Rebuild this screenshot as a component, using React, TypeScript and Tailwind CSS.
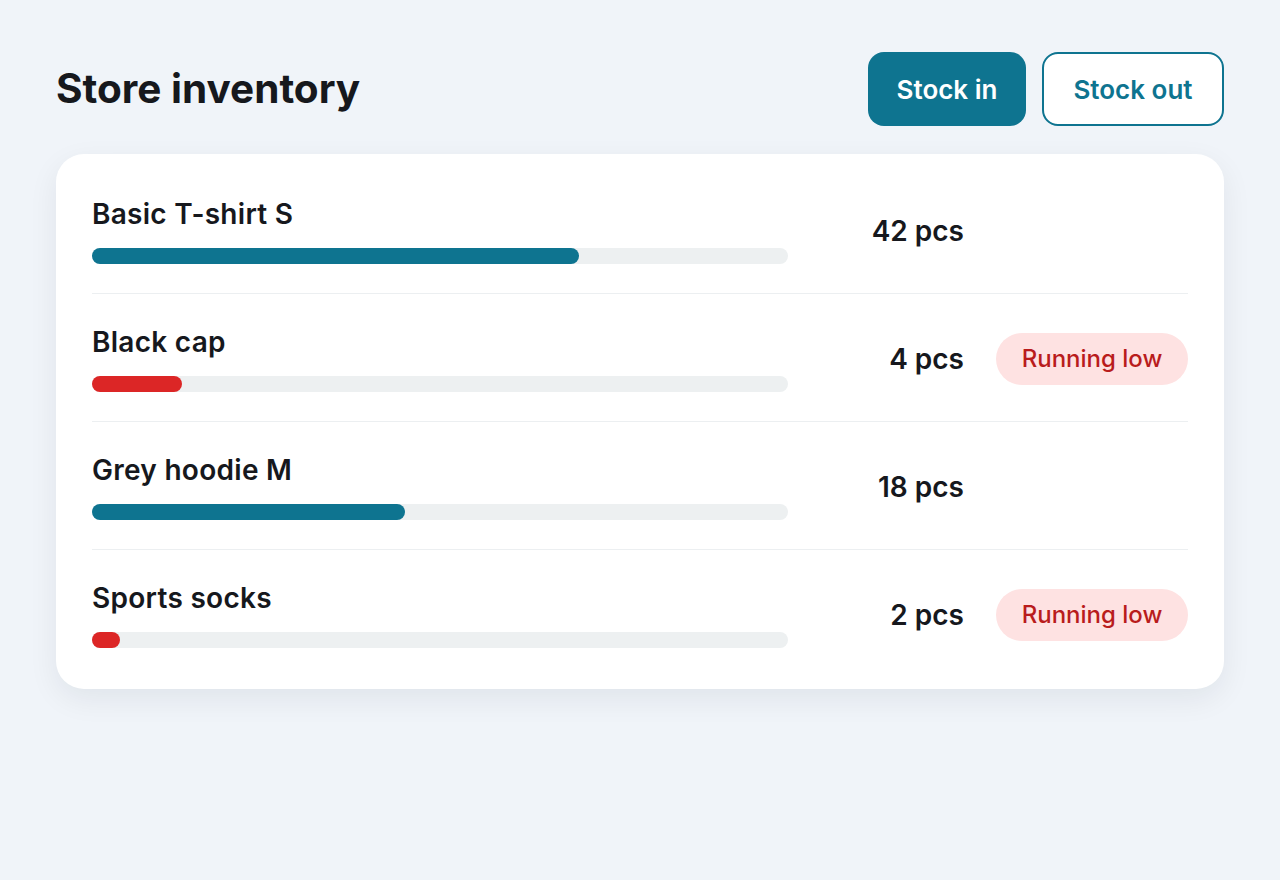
import React from 'react';

const ITEMS: { name: string; qty: number; pct: number; low: boolean }[] = [
  { name: 'Basic T-shirt S', qty: 42, pct: 70, low: false },
  { name: 'Black cap', qty: 4, pct: 13, low: true },
  { name: 'Grey hoodie M', qty: 18, pct: 45, low: false },
  { name: 'Sports socks', qty: 2, pct: 4, low: true },
];

export default function App() {
  return (
    <div
      className="min-h-[880px] w-full bg-[#f0f4f9] px-14 pt-[52px] text-[#16181d]"
      style={{ fontFamily: 'Inter, "Noto Sans", sans-serif' }}
    >
      <div className="flex items-center justify-between">
        <h1 className="text-[40.5px] font-bold leading-none">Store inventory</h1>
        <div className="flex gap-4">
          <button className="h-[74px] w-[158px] rounded-2xl bg-[#0e7490] text-[26px] font-semibold text-white">
            Stock in
          </button>
          <button className="h-[74px] w-[182px] rounded-2xl border-2 border-[#0e7490] bg-white text-[26px] font-semibold text-[#0e7490]">
            Stock out
          </button>
        </div>
      </div>

      <div className="mt-7 rounded-[28px] bg-white px-9 py-3 shadow-[0_10px_30px_rgba(15,23,42,0.07)]">
        {ITEMS.map((item, i) => (
          <div
            key={item.name}
            className={
              'flex items-center pt-8 pb-[29px] ' +
              (i < ITEMS.length - 1 ? 'border-b border-[#eceff1]' : '')
            }
          >
            <div className="w-[696px]">
              <div className="text-[28px] font-semibold leading-8 tracking-[0.01em]">{item.name}</div>
              <div className="mt-[18px] h-4 w-full rounded-full bg-[#edf0f1]">
                <div
                  className={'h-4 rounded-full ' + (item.low ? 'bg-[#dc2626]' : 'bg-[#0e7490]')}
                  style={{ width: `${item.pct}%` }}
                />
              </div>
            </div>
            <div className="flex-1 text-right text-[28px] font-semibold">{item.qty} pcs</div>
            <div className="ml-8 flex w-[192px] justify-end">
              {item.low && (
                <span className="flex h-[52px] w-[192px] items-center justify-center rounded-full bg-[#fee2e2] text-[24px] font-medium text-[#b91c1c]">
                  Running low
                </span>
              )}
            </div>
          </div>
        ))}
      </div>
    </div>
  );
}
